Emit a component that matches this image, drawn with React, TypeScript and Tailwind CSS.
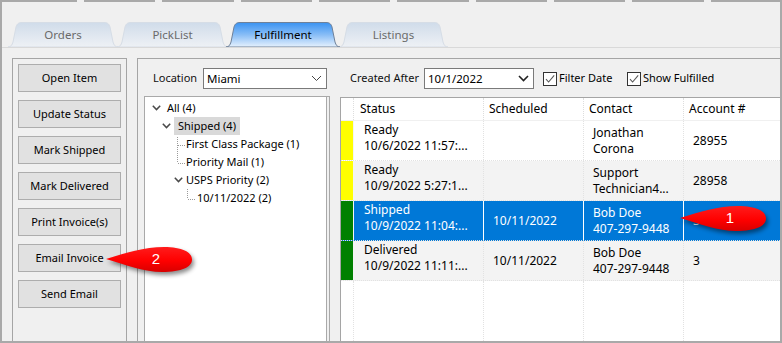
import React from "react";

type TabDef = { label: string; w: number; cls: string; active: boolean };

const TABS: TabDef[] = [
  { label: "Orders", w: 110, cls: "w-[110px] ml-[6px]", active: false },
  { label: "PickList", w: 111, cls: "w-[111px] -ml-[1px]", active: false },
  { label: "Fulfillment", w: 114, cls: "w-[114px] -ml-[2px]", active: true },
  { label: "Listings", w: 109, cls: "w-[109px] -ml-[1px]", active: false },
];

function Tab({ label, w, cls, active }: TabDef) {
  const id = `tabgrad-${label}`;
  const d = `M0 25 C3 25 4 23 5 20 L8 5 C9 1.5 11 0.5 14 0.5 L${w - 14} 0.5 C${w - 11} 0.5 ${w - 9} 1.5 ${w - 8} 5 L${w - 5} 20 C${w - 4} 23 ${w - 3} 25 ${w} 25 Z`;
  return (
    <div
      className={`relative h-[25px] shrink-0 flex items-center justify-center ${cls} ${
        active ? "z-10 text-black" : "text-[#6a6a6a]"
      }`}
    >
      <svg className="absolute left-0 top-0" width={w} height={25}>
        <defs>
          <linearGradient id={id} x1="0" y1="0" x2="0" y2="1">
            {active ? (
              <>
                <stop offset="0" stopColor="#3a93f2" />
                <stop offset="0.5" stopColor="#88bdf6" />
                <stop offset="1" stopColor="#e6f1fd" />
              </>
            ) : (
              <>
                <stop offset="0" stopColor="#d0dcea" />
                <stop offset="1" stopColor="#eef1f5" />
              </>
            )}
          </linearGradient>
        </defs>
        <path
          d={d}
          fill={`url(#${id})`}
          stroke={active ? "#6f8199" : "#d6dde6"}
          strokeWidth={1}
        />
      </svg>
      <span className="relative leading-none">{label}</span>
    </div>
  );
}

const BUTTONS = [
  "Open Item",
  "Update Status",
  "Mark Shipped",
  "Mark Delivered",
  "Print Invoice(s)",
  "Email Invoice",
  "Send Email",
];

function Chevron({ thin }: { thin?: boolean }) {
  return (
    <svg width="11" height="7" viewBox="0 0 11 7" className="block">
      <path
        d="M1 1 L5.5 5.5 L10 1"
        fill="none"
        stroke={thin ? "#444" : "#222"}
        strokeWidth={thin ? 1 : 1.6}
      />
    </svg>
  );
}

function TreeChevron() {
  return (
    <svg width="9" height="6" viewBox="0 0 9 6" className="block shrink-0">
      <path d="M0.8 0.8 L4.5 4.6 L8.2 0.8" fill="none" stroke="#4a4a4a" strokeWidth="1.5" />
    </svg>
  );
}

function Checkbox({ label, cls }: { label: string; cls: string }) {
  return (
    <div className={`flex items-center shrink-0 ${cls}`}>
      <div className="w-[14px] h-[14px] border border-[#333333] bg-white flex items-center justify-center">
        <svg width="12" height="12" viewBox="0 0 12 12">
          <path d="M2 6.2 L4.6 9 L10.2 2.4" fill="none" stroke="#5a5a5a" strokeWidth="1.1" />
        </svg>
      </div>
      <span className="ml-[2px] text-black">{label}</span>
    </div>
  );
}

type Row = {
  color: string;
  s1: string;
  s2: string;
  sched: string;
  c1: string;
  c2: string;
  acct: string;
  bg: string;
  sel: boolean;
};

const ROWS: Row[] = [
  {
    color: "bg-[#ffff00]",
    s1: "Ready",
    s2: "10/6/2022 11:57:...",
    sched: "",
    c1: "Jonathan",
    c2: "Corona",
    acct: "28955",
    bg: "bg-white",
    sel: false,
  },
  {
    color: "bg-[#ffff00]",
    s1: "Ready",
    s2: "10/9/2022 5:27:1...",
    sched: "",
    c1: "Support",
    c2: "Technician4...",
    acct: "28958",
    bg: "bg-[#f3f3f3]",
    sel: false,
  },
  {
    color: "bg-[#008000]",
    s1: "Shipped",
    s2: "10/9/2022 11:04:...",
    sched: "10/11/2022",
    c1: "Bob Doe",
    c2: "407-297-9448",
    acct: "3",
    bg: "bg-[#0078d7]",
    sel: true,
  },
  {
    color: "bg-[#008000]",
    s1: "Delivered",
    s2: "10/9/2022 11:11:...",
    sched: "10/11/2022",
    c1: "Bob Doe",
    c2: "407-297-9448",
    acct: "3",
    bg: "bg-[#f3f3f3]",
    sel: false,
  },
];

function Callout({ n, cls }: { n: string; cls: string }) {
  return (
    <div className={`absolute w-[90px] h-[30px] ${cls}`}>
      <svg
        width="90"
        height="30"
        viewBox="0 0 90 30"
        className="absolute left-0 top-0 drop-shadow-[2px_3px_2px_rgba(0,0,0,0.45)]"
      >
        <defs>
          <linearGradient id={`callout-${n}`} x1="0" y1="0" x2="0" y2="1">
            <stop offset="0" stopColor="#ff1c1c" />
            <stop offset="0.55" stopColor="#ff0000" />
            <stop offset="1" stopColor="#d80000" />
          </linearGradient>
        </defs>
        <path
          d="M0 12 C20 6 38 0 58 0 C76 0 86 5 86 12.5 C86 20 76 25 56 25 C38 25 20 18 0 12 Z"
          fill={`url(#callout-${n})`}
        />
      </svg>
      <span className="absolute left-[44px] top-[3px] w-[12px] text-center text-white text-[15px] leading-[18px] font-['Liberation_Sans',Arial,sans-serif]">
        {n}
      </span>
    </div>
  );
}

export default function App() {
  return (
    <div className="relative w-[782px] h-[343px] bg-[#f0f0f0] overflow-hidden font-['Noto_Sans','Open_Sans',sans-serif] text-[11px] text-black flex flex-col">
      {/* top strip */}
      <div className="h-[2px] flex shrink-0">
        <div className="w-[84px] h-full bg-[#a9a9a9]" />
        <div className="w-[78px] h-full bg-[#a9a9a9] ml-[7px]" />
        <div className="w-[78px] h-full bg-[#a9a9a9] ml-[7px]" />
        <div className="w-[78px] h-full bg-[#a9a9a9] ml-[7px]" />
        <div className="w-[78px] h-full bg-[#a9a9a9] ml-[7px]" />
        <div className="w-[78px] h-full bg-[#a9a9a9] ml-[7px]" />
        <div className="w-[78px] h-full bg-[#a9a9a9] ml-[7px]" />
        <div className="w-[78px] h-full bg-[#a9a9a9] ml-[7px]" />
        <div className="w-[78px] h-full bg-[#a9a9a9] ml-[7px]" />
        <div className="w-[78px] h-full bg-[#a9a9a9] ml-[7px]" />
      </div>

      <div className="flex-1 flex flex-col border-l-2 border-r-2 border-b-2 border-[#a9a9a9] overflow-hidden">
        {/* tabs */}
        <div className="pt-[20px] shrink-0 border-b border-[#d9d9d9] flex items-end text-[11.5px]">
          {TABS.map((t) => (
            <Tab key={t.label} {...t} />
          ))}
        </div>

        {/* panels */}
        <div className="mt-[10px] flex-1 flex min-h-0">
          {/* left button panel */}
          <div className="ml-[10px] w-[115px] shrink-0 border-l border-t border-r border-[#a5a5a5] pt-[5px] px-[5px] flex flex-col gap-[8px]">
            {BUTTONS.map((b) => (
              <div
                key={b}
                className="h-[28px] shrink-0 bg-[#e1e1e1] border border-[#adadad] flex items-center justify-center text-black"
              >
                {b}
              </div>
            ))}
          </div>

          {/* main panel */}
          <div className="ml-[10px] flex-1 border-l border-t border-[#a5a5a5] flex flex-col min-w-0">
            {/* filter row */}
            <div className="pt-[9px] flex items-center shrink-0 whitespace-nowrap">
              <span className="ml-[15px] w-[50px] shrink-0 text-[#111]">Location</span>
              <div className="w-[124px] h-[21px] shrink-0 bg-white border border-[#7a7a7a] flex items-center justify-between pl-[3px] pr-[4px] text-[11.5px]">
                <span>Miami</span>
                <Chevron thin />
              </div>
              <span className="ml-[23px] w-[74px] shrink-0 text-[#111]">Created After</span>
              <div className="w-[110px] h-[21px] shrink-0 bg-white border border-[#7a7a7a] flex items-center justify-between pl-[3px] pr-[4px] text-[11.5px]">
                <span>10/1/2022</span>
                <Chevron />
              </div>
              <Checkbox label="Filter Date" cls="ml-[9px] w-[84px]" />
              <Checkbox label="Show Fulfilled" cls="" />
            </div>

            <div className="mt-[7px] flex-1 flex min-h-0">
              {/* tree */}
              <div className="ml-[6px] w-[186px] shrink-0 border-l border-t border-r border-[#a9a9a9] pr-[2px] flex">
                <div className="relative flex-1 bg-white border-r border-[#a9a9a9] pt-[2px] whitespace-nowrap">
                  <svg className="absolute left-0 top-0" width="120" height="120">
                    <g stroke="#9a9a9a" strokeWidth="1" strokeDasharray="1 1" fill="none">
                      <path d="M32.5 40 V66" />
                      <path d="M33 48.5 H40" />
                      <path d="M33 66.5 H40" />
                      <path d="M42.5 92 V102" />
                      <path d="M43 102.5 H50" />
                    </g>
                  </svg>
                  <div className="h-[18px] flex items-center pl-[7px]">
                    <TreeChevron />
                    <span className="ml-[6px]">All (4)</span>
                  </div>
                  <div className="h-[18px] flex items-center pl-[17px]">
                    <TreeChevron />
                    <span className="ml-[3px] h-[18px] px-[4px] bg-[#d9d9d9] flex items-center">
                      Shipped (4)
                    </span>
                  </div>
                  <div className="h-[18px] flex items-center pl-[41px]">First Class Package (1)</div>
                  <div className="h-[18px] flex items-center pl-[41px]">Priority Mail (1)</div>
                  <div className="h-[18px] flex items-center pl-[29px]">
                    <TreeChevron />
                    <span className="ml-[3px]">USPS Priority (2)</span>
                  </div>
                  <div className="h-[18px] flex items-center pl-[52px]">10/11/2022 (2)</div>
                </div>
              </div>

              {/* grid */}
              <div className="ml-[10px] mt-[1px] flex-1 border-l border-t border-[#a5a5a5] bg-white flex flex-col min-w-0 whitespace-nowrap text-[12px]">
                {/* header */}
                <div className="h-[23px] flex shrink-0 border-b border-[#f0f0f0]">
                  <div className="w-[13px] shrink-0 border-r border-dotted border-[#dddddd]" />
                  <div className="w-[130px] shrink-0 border-r border-dotted border-[#dddddd] pl-[6px] flex items-center">
                    Status
                  </div>
                  <div className="w-[100px] shrink-0 border-r border-dotted border-[#dddddd] pl-[5px] flex items-center">
                    Scheduled
                  </div>
                  <div className="w-[100px] shrink-0 border-r border-dotted border-[#dddddd] pl-[5px] flex items-center">
                    Contact
                  </div>
                  <div className="w-[100px] shrink-0 pl-[5px] flex items-center">Account #</div>
                </div>

                {ROWS.map((r, i) => (
                  <div
                    key={i}
                    className={`h-[40px] flex shrink-0 border-b border-dotted border-[#e2e2e2] ${r.bg} ${
                      r.sel ? "text-white" : "text-black"
                    }`}
                  >
                    <div className="w-[13px] shrink-0 bg-white border-r border-[#f4f4f4] flex">
                      <div className={`w-[12px] ${r.color}`} />
                    </div>
                    <div
                      className={`w-[130px] shrink-0 pl-[10px] pt-[1px] leading-[16px] flex flex-col ${
                        r.sel ? "border-r border-white" : "border-r border-dotted border-[#e2e2e2]"
                      }`}
                    >
                      <span>{r.s1}</span>
                      <span>{r.s2}</span>
                    </div>
                    <div
                      className={`w-[100px] shrink-0 pl-[9px] flex items-center ${
                        r.sel ? "border-r border-white" : "border-r border-dotted border-[#e2e2e2]"
                      }`}
                    >
                      {r.sched}
                    </div>
                    <div
                      className={`w-[100px] shrink-0 pl-[9px] leading-[16px] flex flex-col justify-center ${
                        r.sel ? "border-r border-white" : "border-r border-dotted border-[#e2e2e2]"
                      }`}
                    >
                      <span>{r.c1}</span>
                      <span>{r.c2}</span>
                    </div>
                    <div className="w-[100px] shrink-0 pl-[9px] flex items-center">{r.acct}</div>
                  </div>
                ))}

                {/* empty area */}
                <div className="flex-1 flex">
                  <div className="w-[13px] shrink-0 border-r border-dotted border-[#e2e2e2]" />
                  <div className="w-[130px] shrink-0 border-r border-dotted border-[#e2e2e2]" />
                  <div className="w-[100px] shrink-0 border-r border-dotted border-[#e2e2e2]" />
                  <div className="w-[100px] shrink-0 border-r border-dotted border-[#e2e2e2]" />
                  <div className="w-[100px] shrink-0" />
                </div>
              </div>
            </div>
          </div>
        </div>
      </div>

      <Callout n="1" cls="left-[680px] top-[206px]" />
      <Callout n="2" cls="left-[106px] top-[247px]" />
    </div>
  );
}
